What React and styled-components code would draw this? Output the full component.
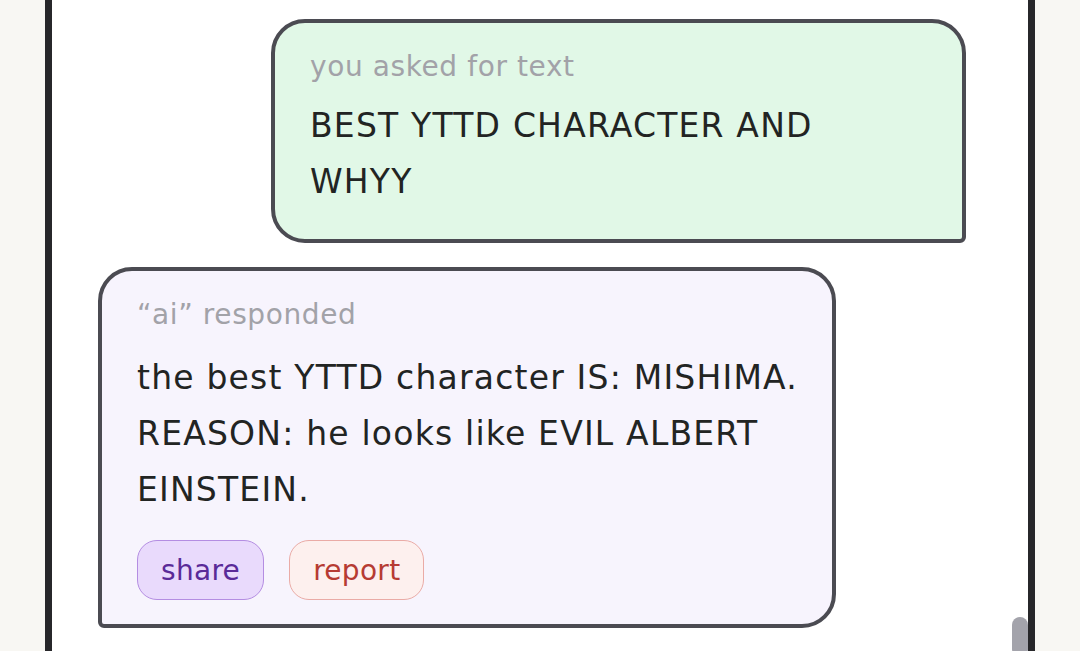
import React from 'react';
import styled, { createGlobalStyle } from 'styled-components';

const GlobalStyle = createGlobalStyle`
    html, body {
        margin: 0;
        padding: 0;
        background: #f8f7f3;
        font-family: 'DejaVu Sans', 'Noto Sans', sans-serif;
    }
`;

const Column = styled.div`
    width: 976px;
    height: 651px;
    margin: 0 auto;
    border-left: 7px solid #27272a;
    border-right: 7px solid #27272a;
    background: #ffffff;
    display: flex;
    overflow: hidden;
`;

const Feed = styled.div`
    flex: 1;
    display: flex;
    flex-direction: column;
    gap: 24px;
    padding: 19px 46px 0;
`;

const Track = styled.div`
    width: 16px;
    display: flex;
    flex-direction: column;
    justify-content: flex-end;
`;

const Thumb = styled.div`
    height: 40px;
    margin-bottom: -6px;
    border-radius: 8px;
    background: #a3a3ab;
`;

const Bubble = styled.div`
    box-sizing: border-box;
    width: ${props => props.$width}px;
    align-self: ${props => (props.$mine ? 'flex-end' : 'flex-start')};
    background: ${props => (props.$mine ? '#e1f8e7' : '#f7f4fd')};
    border: 4px solid #4b4b52;
    border-radius: ${props => (props.$mine ? '34px 34px 6px 34px' : '34px 34px 34px 6px')};
    padding: ${props => props.$pad};
`;

const Label = styled.div`
    font-size: 28px;
    line-height: 34px;
    letter-spacing: 0.6px;
    color: #a2a2a8;
    margin-bottom: ${props => props.$gap}px;
`;

const Body = styled.div`
    font-size: 33px;
    line-height: 56px;
    letter-spacing: 1.2px;
    white-space: nowrap;
    color: #222423;
`;

const Actions = styled.div`
    display: flex;
    gap: 25px;
    margin-top: 22px;
`;

const Pill = styled.button`
    height: 60px;
    padding: 0 23px;
    border-radius: 20px;
    font-family: inherit;
    font-size: 28px;
    letter-spacing: 0.3px;
    border: 1.5px solid ${props => props.$border};
    background: ${props => props.$bg};
    color: ${props => props.$color};
`;

export default function App() {
    return (
        <>
            <GlobalStyle />
            <Column>
                <Feed>
                    <Bubble $mine $width={695} $pad="27px 36px 29px 35px">
                        <Label $gap={14}>you asked for text</Label>
                        <Body>BEST YTTD CHARACTER AND<br />WHYY</Body>
                    </Bubble>
                    <Bubble $width={738} $pad="27px 32px 24px 35px">
                        <Label $gap={18}>“ai” responded</Label>
                        <Body>
                            the best YTTD character IS: MISHIMA.<br />
                            REASON: he looks like EVIL ALBERT<br />
                            EINSTEIN.
                        </Body>
                        <Actions>
                            <Pill $bg="#e9dafc" $border="#b48de2" $color="#5a2a98">share</Pill>
                            <Pill $bg="#fdf0ee" $border="#eaaba6" $color="#b63b33">report</Pill>
                        </Actions>
                    </Bubble>
                </Feed>
                <Track>
                    <Thumb />
                </Track>
            </Column>
        </>
    );
}
